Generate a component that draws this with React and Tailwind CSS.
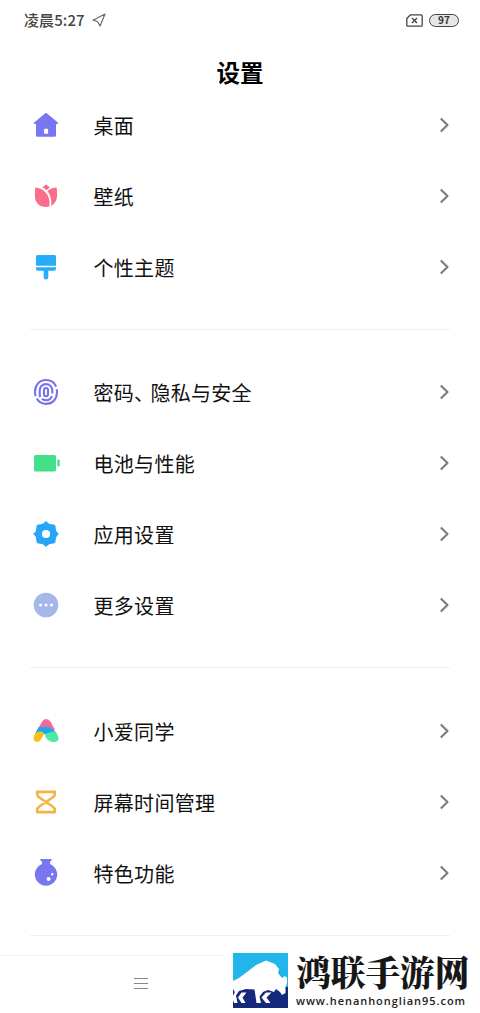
import { Fragment } from 'react';

function HomeIcon() {
	return (
		<svg viewBox="0 0 28 28" className="size-7">
			<path d="M13.2 2.3q.8-.7 1.6 0L25.8 11.500q.9 1.300-.4 1.500H24v11.500q0 1.300-1.300 1.300H5.300Q4 25.800 4 24.500V13H2.600q-1.300-.200-.400-1.500z" fill="#7976f2" />
			<rect x="12.100" y="17.800" width="4" height="5" rx="0.600" fill="#fff" />
		</svg>
	);
}

function TulipIcon() {
	return (
		<svg viewBox="0 0 28 28" className="size-7">
			<path d="M10.500 5.600Q12.500 3.800 14 2.600q1.800 1.200 3.700 3-1.700 1-3.300 2.600-1.800-1.800-3.900-2.600z" fill="#ef6b88" />
			<path d="M3.300 5.500q5.500.400 9.800 4.400 5.300 5 4.400 14.400-1.600.700-3.400.700C7 25 2.700 20.500 2.900 13q0-4 .4-7.500z" fill="#fa6e8c" />
			<path d="M15.400 9q3.700-3.200 9.200-3.500.5 4 .5 7.500c0 5-2.200 8.900-5.800 10.700Q19.700 14 15.400 9z" fill="#fa6e8c" />
		</svg>
	);
}

function BrushIcon() {
	return (
		<svg viewBox="0 0 28 28" className="size-7">
			<path d="M5.500 2h17q1.500 0 1.500 1.500v9.300H4V3.500Q4 2 5.500 2z" fill="#27acfa" />
			<path d="M4 14.200h20v1.600q0 2-2 2h-5.700v6.400q0 2.300-2.300 2.300t-2.300-2.300v-6.400H6q-2 0-2-2z" fill="#27acfa" />
		</svg>
	);
}

function FingerprintIcon() {
	return (
		<svg viewBox="0 0 28 28" className="size-7" fill="none" stroke="#7772e8" strokeWidth="2.100">
			<rect x="12" y="10" width="4" height="8.200" rx="2" />
			<path d="M8.200 19.200q-.5-1.300-.5-3.400V13c0-4 2.500-6.900 6.300-6.900s6.300 2.900 6.300 6.900v2.600M20 18c-.8 2.700-3 4.200-6 4.200-1.500 0-2.900-.5-4-1.300" />
			<path d="M3.700 18.200Q3 16 3 13.800C3 7 7.400 2 14 2c4.800 0 8.500 2.600 10.100 6.700M24.800 11.200q.3 1.500.2 3.300c-.2 6.700-4.500 11.400-11 11.400-4 0-7.400-2-9.300-5.300" />
		</svg>
	);
}

function BatteryIcon() {
	return (
		<svg viewBox="0 0 28 28" className="size-7">
			<rect x="2" y="6" width="22" height="16.500" rx="1.600" fill="#43e088" />
			<rect x="25.300" y="10.500" width="2.400" height="7" rx="1" fill="#43e088" />
		</svg>
	);
}

function GearIcon() {
	return (
		<svg viewBox="0 0 28 28" className="size-7">
			<path
				d="M14 2.500Q16 5 17.800 5.100Q19.500 5.200 22.200 5.800Q22.700 8.500 22.900 10.200Q23.100 12 25.500 14Q23.100 16 22.900 17.800Q22.700 19.500 22.200 22.200Q19.500 22.700 17.800 22.900Q16 23.100 14 25.500Q12 23.100 10.200 22.900Q8.500 22.700 5.800 22.200Q5.200 19.500 5.100 17.800Q5 16 2.500 14Q5 12 5.100 10.200Q5.200 8.500 5.800 5.800Q8.500 5.200 10.200 5.100Q12 5 14 2.500z"
				fill="#27a5f8"
				stroke="#27a5f8"
				strokeWidth="2.200"
				strokeLinejoin="round"
			/>
			<circle cx="14" cy="14" r="4.100" fill="#fff" />
		</svg>
	);
}

function MoreIcon() {
	return (
		<svg viewBox="0 0 28 28" className="size-7">
			<circle cx="14" cy="14" r="12.300" fill="#a5b7e8" />
			<circle cx="8.500" cy="14" r="1.500" fill="#fff" />
			<circle cx="14" cy="14" r="1.500" fill="#fff" />
			<circle cx="19.500" cy="14" r="1.500" fill="#fff" />
		</svg>
	);
}

function AssistantIcon() {
	return (
		<svg viewBox="0 0 28 28" className="size-7">
			<path d="M10 4.700Q11.400 2 14.200 2t4.400 2.700L23 13 8 15 5.500 12.500z" fill="#ee6b9c" />
			<path d="M6.500 10.600q6-1.600 11.300.2 3.600 1.300 6.600 5l-4.600 4q-4.600-4.500-9.200-1.600L3.500 18l-.4-1.500z" fill="#1ba8ee" />
			<path d="M3 16.500q3-2.600 7-1.700 1.800.6 2 2.100l-3 5.500q-1.600 2.500-4 2.500-3.500-.2-3.400-3.600.1-2.500 1.400-4.800z" fill="#fbc01c" />
			<path d="M12.800 18.500c2.700-3.200 7.900-4.400 11.200-3.200q2.500 3.200 2.600 6.300c0 2.500-2.100 3.500-4.300 3.500-4.400 0-7.200-2-9.500-6.600z" fill="#4feaa0" />
		</svg>
	);
}

function HourglassIcon() {
	return (
		<svg viewBox="0 0 28 28" className="size-7" fill="none" stroke="#f2b544" strokeWidth="2.700" strokeLinejoin="round">
			<path d="M5.200 3.800h17.600V6q0 2-2.200 3.500L14 14l-6.600-4.500Q5.200 8 5.200 6zM5.200 24.200h17.600V22q0-2-2.200-3.500L14 14l-6.600 4.500Q5.200 20 5.200 22z" />
		</svg>
	);
}

function FlaskIcon() {
	return (
		<svg viewBox="0 0 28 28" className="size-7">
			<path d="M9.500 0h9q1.300 0 1.300 1T18.300 2L18 5.100a11.200 11.200 0 1 1-8 0L9.700 2Q8.200 2 8.200 1t1.300-1z" fill="#7976f2" />
			<circle cx="16.600" cy="20" r="2" fill="#fff" />
			<circle cx="20.200" cy="15.300" r="1.200" fill="#fff" />
		</svg>
	);
}

const groups = [
	{
		divider: 'mt-[27px] mb-[26px]',
		rows: [
			{ label: '桌面', Icon: HomeIcon },
			{ label: '壁纸', Icon: TulipIcon },
			{ label: '个性主题', Icon: BrushIcon },
		],
	},
	{
		divider: 'mt-[27px] mb-[27px]',
		rows: [
			{ label: '密码、隐私与安全', Icon: FingerprintIcon },
			{ label: '电池与性能', Icon: BatteryIcon },
			{ label: '应用设置', Icon: GearIcon },
			{ label: '更多设置', Icon: MoreIcon },
		],
	},
	{
		divider: 'mt-[27px]',
		rows: [
			{ label: '小爱同学', Icon: AssistantIcon },
			{ label: '屏幕时间管理', Icon: HourglassIcon },
			{ label: '特色功能', Icon: FlaskIcon },
		],
	},
];

function StatusBar() {
	return (
		<div className="flex h-10 items-center justify-between pr-[21px] pl-6">
			<div className="flex items-center gap-[7px]">
				<span className="text-[15px] font-medium tracking-[0.1px] text-[#444]">凌晨5:27</span>
				<svg viewBox="0 0 14 14" className="size-3.5" fill="none" stroke="#666" strokeWidth="1.200" strokeLinejoin="round">
					<path d="M13 1L1 7.200L5.500 8.500L8 13z" />
				</svg>
			</div>
			<div className="flex items-center gap-1.5">
				<svg viewBox="0 0 17 13" className="h-[13px] w-[17px]" fill="none" stroke="#444" strokeWidth="1.300">
					<path d="M4.500 .8H15.200q1 0 1 1v9.400q0 1-1 1H1.800q-1 0-1-1V4.500z" strokeLinejoin="round" />
					<path d="M6 4l5 5M11 4L6 9" strokeWidth="1.400" />
				</svg>
				<span className="flex h-[13px] w-[30px] items-center justify-center rounded-full border border-[#444] bg-[#e6e6e6] text-[10px] leading-none font-bold text-[#333]">
					97
				</span>
			</div>
		</div>
	);
}

function RowLabel({ label }) {
	// the enumeration comma is set tighter than a full-width character
	const [first, rest] = label.split('、');
	return (
		<span className="flex-1 pt-0.5 text-[20px] leading-none tracking-[0.300px] text-[#111]">
			{first}
			{rest && <span className="mr-[6px] [font-feature-settings:'palt']">、</span>}
			{rest}
		</span>
	);
}

function SettingRow({ label, Icon }) {
	return (
		<li className="flex h-[71px] items-center pr-[30px] pl-8">
			<span className="mr-[33.500px] flex">
				<Icon />
			</span>
			<RowLabel label={label} />
			<svg viewBox="0 0 11 16" className="h-4 w-[11px]" fill="none" stroke="#7c7c7c" strokeWidth="2.100">
				<path d="M1.800 1.500L8.500 8L1.800 14.500" strokeLinejoin="round" />
			</svg>
		</li>
	);
}

function Watermark() {
	return (
		<div className="absolute top-[945px] left-[225px] flex h-[68px] w-[255px] bg-white pt-2 pl-2">
			<svg viewBox="0 0 55 55" className="size-[55px] shrink-0">
				<rect width="55" height="55" fill="#20b5eb" />
				<path d="M0 34H55V55H0z" fill="#14287c" />
				<path
					d="M0 28L6 25L14 19L23 12L33 7.500L42 11L46 16L45 20L49 25L52 23L54 25V30L52.500 34V40L49 42L47 39L43 36L41 39L35 37L30 39L26.500 43.500L28 50H23.500L22.500 43L21.500 36.500L13 36L6 38L3 42.500L4.500 50H1L0 47z"
					fill="#fff"
				/>
				<path d="M48.500 10.500Q46 14 49.500 17Q54 20 50 24L46 21L48.500 19Q44 15 48.500 10.500z" fill="#20b5eb" />
				<path d="M8.500 39.500H13.500L9.500 44.500L12.500 50H8.500L5 44.500zM33 39.500H38.500L33.500 44.500L37.500 50H33L28.500 44.500z" fill="#fff" />
				<path d="M0 36L1.800 39L0 43z" fill="#14287c" />
			</svg>
			<div className="ml-2">
				<p className="h-[38px] pt-[3px] font-['Noto_Serif_CJK_SC','Noto_Sans_CJK_SC',serif] text-[34.700px] leading-[30px] font-black whitespace-nowrap text-[#171717]">
					鸿联手游网
				</p>
				<p className="font-['Open_Sans','Noto_Sans',sans-serif] text-[11px] leading-[20px] font-semibold tracking-[0.950px] text-[#222]">
					www.henanhonglian95.com
				</p>
			</div>
		</div>
	);
}

export default function App() {
	return (
		<div className="relative flex h-[1013px] w-[480px] flex-col overflow-hidden bg-white font-['Noto_Sans_CJK_SC',sans-serif]">
			<StatusBar />
			<header className="flex h-[49px] items-start justify-center pt-[20px]">
				<h1 className="text-[23.500px] leading-6 font-bold text-black">设置</h1>
			</header>
			<main>
				{groups.map(({ rows, divider }) => (
					<Fragment key={rows[0].label}>
						<ul>
							{rows.map((row) => (
								<SettingRow key={row.label} label={row.label} Icon={row.Icon} />
							))}
						</ul>
						<div className={`mx-[30px] h-px bg-[#f0f0f0] ${divider}`} />
					</Fragment>
				))}
			</main>
			<nav className="absolute inset-x-0 top-[955px] h-[58px] border-t border-[#f5f5f5] bg-white">
				<div className="mt-[22px] ml-[134px] flex w-3.5 flex-col gap-1">
					<span className="h-px bg-[#888]" />
					<span className="h-px bg-[#888]" />
					<span className="h-px bg-[#888]" />
				</div>
			</nav>
			<Watermark />
		</div>
	);
}
